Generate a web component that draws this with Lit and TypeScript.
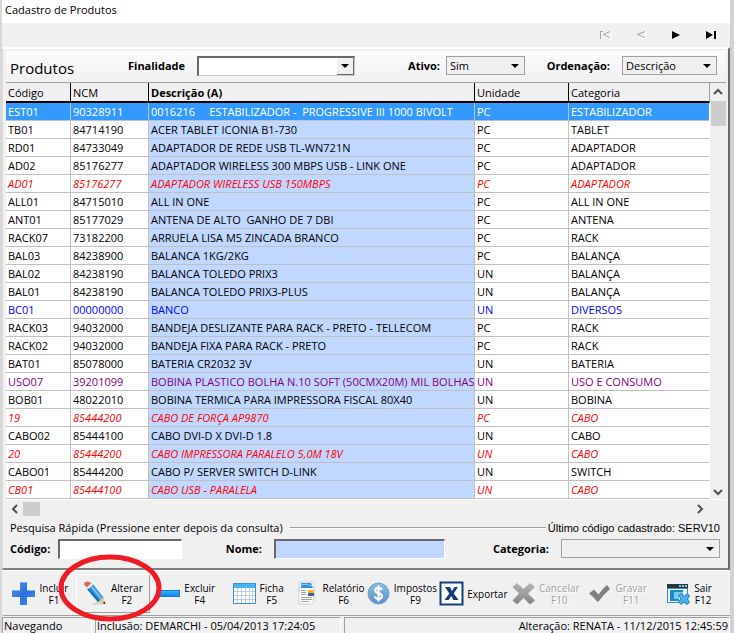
import { LitElement, html, css, svg, nothing, type TemplateResult } from "lit";
import { customElement } from "lit/decorators.js";
import { classMap } from "lit/directives/class-map.js";

type Tone = "" | "red" | "blue" | "purple" | "selected";
type Row = [string, string, string, string, string, Tone];

const rows: Row[] = [
  ["EST01", "90328911", "0016216     ESTABILIZADOR -  PROGRESSIVE III 1000 BIVOLT", "PC", "ESTABILIZADOR", "selected"],
  ["TB01", "84714190", "ACER TABLET ICONIA B1-730", "PC", "TABLET", ""],
  ["RD01", "84733049", "ADAPTADOR DE REDE USB TL-WN721N", "PC", "ADAPTADOR", ""],
  ["AD02", "85176277", "ADAPTADOR WIRELESS 300 MBPS USB - LINK ONE", "PC", "ADAPTADOR", ""],
  ["AD01", "85176277", "ADAPTADOR WIRELESS USB 150MBPS", "PC", "ADAPTADOR", "red"],
  ["ALL01", "84715010", "ALL IN ONE", "PC", "ALL IN ONE", ""],
  ["ANT01", "85177029", "ANTENA DE ALTO  GANHO DE 7 DBI", "PC", "ANTENA", ""],
  ["RACK07", "73182200", "ARRUELA LISA M5 ZINCADA BRANCO", "PC", "RACK", ""],
  ["BAL03", "84238900", "BALANCA 1KG/2KG", "PC", "BALANÇA", ""],
  ["BAL02", "84238190", "BALANCA TOLEDO PRIX3", "UN", "BALANÇA", ""],
  ["BAL01", "84238190", "BALANCA TOLEDO PRIX3-PLUS", "UN", "BALANÇA", ""],
  ["BC01", "00000000", "BANCO", "UN", "DIVERSOS", "blue"],
  ["RACK03", "94032000", "BANDEJA DESLIZANTE PARA RACK - PRETO - TELLECOM", "PC", "RACK", ""],
  ["RACK02", "94032000", "BANDEJA FIXA PARA RACK - PRETO", "PC", "RACK", ""],
  ["BAT01", "85078000", "BATERIA CR2032 3V", "UN", "BATERIA", ""],
  ["USO07", "39201099", "BOBINA PLASTICO BOLHA N.10 SOFT (50CMX20M) MIL BOLHAS", "UN", "USO E CONSUMO", "purple"],
  ["BOB01", "48022010", "BOBINA TERMICA PARA IMPRESSORA FISCAL 80X40", "UN", "BOBINA", ""],
  ["19", "85444200", "CABO DE FORÇA AP9870", "PC", "CABO", "red"],
  ["CABO02", "85444100", "CABO DVI-D X DVI-D 1.8", "UN", "CABO", ""],
  ["20", "85444200", "CABO IMPRESSORA PARALELO 5,0M 18V", "UN", "CABO", "red"],
  ["CABO01", "85444200", "CABO P/ SERVER SWITCH D-LINK", "UN", "SWITCH", ""],
  ["CB01", "85444100", "CABO USB - PARALELA", "UN", "CABO", "red"],
];

const icons: Record<string, TemplateResult> = {
  plus: svg`<defs><linearGradient id="gp" x1="0" y1="0" x2="1" y2="1"><stop offset="0" stop-color="#5b9bea"/><stop offset=".5" stop-color="#2c6fe0"/><stop offset="1" stop-color="#3f8cf0"/></linearGradient></defs>
    <path d="M9 1h7v8h8v7h-8v8H9v-8H1V9h8z" fill="url(#gp)"/><path d="M9.500 1.500h6M1.500 9.500H9.500M16 9.500h7.500" stroke="#7fb2f2"/>`,
  pencil: svg`<path d="M8 23l8-3 8 1-3 2-9 1z" fill="#d5d5d5"/>
    <path d="M4 8l6-5 10.500 13.500-5.500 4.500z" fill="#3a9bdc"/><path d="M7 8L17.500 20l-2.500 1L4 8z" fill="#1f6fb0"/><path d="M8.500 5.500l10 12.500" stroke="#7cc9f5" stroke-width="1.500"/>
    <path d="M1 3.500q0-3 3.500-3l2 .5 2.500 2-4.500 4z" fill="#d96a55"/><path d="M4.300 7.300l5-4.300" stroke="#eee" stroke-width="2"/>
    <path d="M15 21l5.500-4.500L22 23z" fill="#e8c98b"/><path d="M19.500 22l2.500-1.500.2 2.800z" fill="#333"/>`,
  minus: svg`<defs><linearGradient id="gm" x1="0" y1="0" x2="0" y2="1"><stop offset="0" stop-color="#38b4ff"/><stop offset="1" stop-color="#0a86ea"/></linearGradient></defs><rect x="1.500" y="9.500" width="22" height="6" fill="url(#gm)" stroke="#1f78c4"/>`,
  calendar: svg`<rect x="1" y="2" width="23" height="21" rx="1" fill="#3d8fd0"/><rect x="2" y="3" width="21" height="4" fill="#49b4ee"/><rect x="2" y="7" width="21" height="15" fill="#fff"/>
    <path d="M2 10.500h21M2 14.500h21M2 18.500h21M5.500 7v15M9.500 7v15M13.500 7v15M17.500 7v15M20.500 7v15" stroke="#c3c8e2"/>`,
  report: svg`<path d="M4 1h15v19l-2 3H4z" fill="#fafafa" stroke="#d0d0d0"/><path d="M6 2h10l2 5H6z" fill="#2a8fe0"/><path d="M6 4q5-2 11 1" stroke="#8cd0fa" fill="none"/>
    <rect x="13" y="9" width="6" height="3" fill="#f3b52e"/><rect x="13" y="12" width="6" height="3" fill="#3167ad"/>
    <path d="M6 9.500h5M6 11.500h5M6 13.500h5M6 16.500h11M6 18.500h11M6 20.500h8" stroke="#a4a4a4"/>`,
  money: svg`<defs><linearGradient id="gd" x1="0" y1="0" x2="0" y2="1"><stop offset="0" stop-color="#8dbbe0"/><stop offset="1" stop-color="#5a94c8"/></linearGradient></defs>
    <circle cx="12.500" cy="12.500" r="10.500" fill="url(#gd)" stroke="#6da0cc"/><path d="M15.900 9q-.7-2.200-3.400-2.200-3.300 0-3.300 2.600 0 2 3.300 2.800 3.500.8 3.500 3.100 0 2.700-3.500 2.700-3.100 0-3.700-2.600M12.500 4.500v16" fill="none" stroke="#fff" stroke-width="2"/>`,
  excel: svg`<rect x="1.500" y="1.500" width="22" height="22" fill="#fff" stroke="#123e78" stroke-width="2"/><path d="M6 6h5l2 4 2.500-4H19l-4.300 6.500L19.500 19h-5l-2.200-4-2.700 4H5.500l4.800-6.600z" fill="#123e78"/>`,
  cancel: svg`<defs><linearGradient id="gc" x1="0" y1="0" x2="0" y2="1"><stop offset="0" stop-color="#b5b5b5"/><stop offset="1" stop-color="#858585"/></linearGradient></defs><path d="M6 2l6.500 6L19 2l5 4-7 6.500 7 7-5 4-6.500-6.500L6 23.500l-4.500-4 6.500-7L1.500 6z" fill="url(#gc)"/>`,
  check: svg`<path d="M2 12.500l5-4 4.500 5Q15.500 7.500 20 4l3 4q-6 5-11.500 12.500H10Q7 16 2 12.500z" fill="#808080"/>`,
  exit: svg`<rect x="1" y="3" width="21" height="19" rx="1" fill="#3f89b8"/><rect x="1" y="3" width="21" height="4" fill="#28343e"/><path d="M13 5h2M16 5h2M19 5h2" stroke="#7fc4ee" stroke-width="2"/>
    <rect x="2" y="8" width="19" height="13" fill="#f2f8fc"/><path d="M4 9h13v3h-4v8H4z" fill="#1b8bd0"/><path d="M8 11h9v3h-4v4H8z" fill="#7cc9f0"/>
    <path d="M12.500 14.500l3-2 3 2.500 3-2.500 2 2.500-2 3 2 3.500-2.500 2-3-2.500-3 2.500-2.500-2.500 2.500-3z" fill="#4db0ee" stroke="#2680ba"/>`,
};

interface Action { icon: string; label: string; key?: string; disabled?: boolean; raised?: boolean }
const actions: Action[] = [
  { icon: "plus", label: "Incluir", key: "F1" },
  { icon: "pencil", label: "Alterar", key: "F2", raised: true },
  { icon: "minus", label: "Excluir", key: "F4" },
  { icon: "calendar", label: "Ficha", key: "F5" },
  { icon: "report", label: "Relatório", key: "F6" },
  { icon: "money", label: "Impostos", key: "F9" },
  { icon: "excel", label: "Exportar" },
  { icon: "cancel", label: "Cancelar", key: "F10", disabled: true },
  { icon: "check", label: "Gravar", key: "F11", disabled: true },
  { icon: "exit", label: "Sair", key: "F12" },
];

const chevron = (d: string) => html`<svg width="10" height="10" viewBox="0 0 10 10" aria-hidden="true"><path d=${d} fill="none" stroke="#505050" stroke-width="2"/></svg>`;
const caret = html`<svg class="caret" width="8" height="4" viewBox="0 0 8 4" aria-hidden="true"><path d="M0 0h8L4 4z"/></svg>`;

@customElement("app-root")
export class AppRoot extends LitElement {
  static styles = css`
    :host { display: block; background: #f0f0f0; color: #000; font: 11px/16px "Open Sans", "Noto Sans", sans-serif; }
    * { box-sizing: border-box; }
    button, select, input { font: inherit; color: inherit; margin: 0; padding: 0; border: 0; border-radius: 0; background: none; }
    svg { display: block; }
    .window { border-left: 2px solid #d8d8d8; border-right: 4px solid #d2d2d2; }
    .title { margin: 0; height: 23px; padding: 1px 3px; background: #fff; font-size: 11px; line-height: 17px; font-weight: 400; }
    .nav { height: 24px; display: flex; justify-content: flex-end; align-items: center; padding-right: 2px; }
    .nav button { width: 35px; height: 22px; display: grid; place-items: center; }
    .panel { border-top: 2px solid #fff; border-right: 2px solid #696969; border-bottom: 2px solid #808080; border-left: 1px solid #dcdcdc; padding: 2px 2px 0 3px; }
    .filters { height: 32px; display: grid; grid-template-columns: 118px 69px 158fr 91px 79fr 97px 95fr; align-items: center; padding: 0 9px 2px 4px; background: linear-gradient(#fcfcfc, #f0f0f0); border-bottom: 1px solid #a0a0a0; }
    .filters h2 { margin: 0; font-size: 15px; line-height: 20px; font-weight: 400; padding-top: 5px; }
    label { font-weight: 700; }
    .right { text-align: right; padding-right: 12px; }
    .near { padding-right: 6px; }
    .combo { display: grid; align-items: center; height: 19px; border: 1px solid #a0a0a0; background: #f0f0f0; }
    .combo select { grid-area: 1 / 1; appearance: none; width: 100%; height: 17px; padding: 0 20px 0 3px; line-height: 16px; }
    .combo .caret { grid-area: 1 / 1; justify-self: end; margin-right: 5px; pointer-events: none; }
    .combo.classic { background: #fff; border-color: #696969 #c8c8c8 #c8c8c8 #696969; border-width: 2px 1px 1px 2px; height: 20px; }
    .combo.classic .caret { width: 17px; height: 17px; margin-right: 0; padding: 6px 4px; background: #f0f0f0; border: solid #696969; border-width: 0 1px 1px 0; }
    .grid { display: grid; grid-template-columns: 1fr 16px; }
    table { width: 100%; border-collapse: separate; border-spacing: 0; table-layout: fixed; background: #fff; }
    .c1 { width: 65px; } .c2 { width: 78px; } .c4 { width: 94px; } .c5 { width: 141px; }
    th { height: 20px; padding: 2px 2px 0; text-align: left; font-weight: 400; background: #f0f0f0; border-right: 1px solid #000; border-bottom: 2px solid #000; line-height: 16px; }
    thead tr { height: 19px; }
    th.sorted { font-weight: 700; }
    th:last-child { border-right-color: #a0a0a0; }
    td { height: 18px; padding: 0 0 0 2px; white-space: pre; overflow: hidden; line-height: 17px; border-right: 1px solid #c0c0c0; border-bottom: 1px solid #c0c0c0; }
    td:last-child { border-right-color: #fff; }
    td.desc { background: #c0d7ff; }
    .red td { color: #f00; font-style: italic; }
    .blue td { color: #00f; }
    .purple td { color: #800080; }
    .selected td, .selected td.desc { color: #fff; background: #3399ff; }
    .vbar { display: flex; flex-direction: column; align-items: center; }
    .vbar button { width: 16px; height: 18px; display: grid; place-items: center; }
    .thumb { width: 15px; height: 25px; background: #cdcdcd; }
    .vbar .last { margin-top: auto; height: 14px; }
    .hbar { display: flex; align-items: center; height: 18px; padding: 0 18px 0 0; border-top: 1px solid #fff; }
    .hbar button { width: 17px; height: 16px; display: grid; place-items: center; }
    .hbar .thumb { width: 17px; height: 14px; }
    .hbar .last { margin-left: auto; }
    .search { display: flex; align-items: center; height: 20px; padding: 2px 6px 0 4px; }
    .rule { flex: 1; height: 2px; margin: 0 2px 0 7px; background: #a0a0a0; border-bottom: 1px solid #fff; }
    .last-code { font: 11px/16px "Liberation Sans", Arial, sans-serif; }
    .fields { display: grid; grid-template-columns: 48px 124fr 92px 171fr 116px 159fr; align-items: center; height: 31px; padding: 1px 6px 9px 4px; }
    .fields input { width: 100%; height: 20px; padding: 0 3px; background: #fff; border: solid; border-width: 2px 1px 1px 2px; border-color: #696969 #fff #fff #696969; }
    .fields input.tint { background: #c0d7ff; }
    .toolbar { display: flex; height: 46px; margin-left: 1px; padding: 3px 5px 2px 1px; border-top: 1px solid #fff; border-bottom: 1px solid #a0a0a0; }
    .toolbar button { flex: 1; display: flex; align-items: center; justify-content: center; gap: 3px; font-size: 10px; line-height: 12px; text-align: center; position: relative; }
    .toolbar button span { display: block; }
    .toolbar .raised { border: 1px solid; border-color: #fff #a0a0a0 #a0a0a0 #fff; }
    .toolbar button:disabled { color: #a0a0a0; text-shadow: 1px 1px #fff; }
    .ring { position: absolute; left: -19px; top: -21px; overflow: visible; pointer-events: none; z-index: 1; }
    .status { display: grid; grid-template-columns: 90px 246fr 386fr; gap: 3px; height: 18px; padding-top: 1px; line-height: 16px; }
    .status span { border-top: 1px solid #a0a0a0; border-left: 1px solid #a0a0a0; border-right: 1px solid #fff; padding: 0 1px; white-space: nowrap; }
    .status .end { text-align: right; }
  `;

  private action(a: Action) {
    return html`<button type="button" class=${classMap({ raised: !!a.raised })} ?disabled=${a.disabled}>
      <svg width="25" height="25" viewBox="0 0 25 25" aria-hidden="true">${icons[a.icon]}</svg>
      <span>${a.label}${a.key ? html`<br />${a.key}` : nothing}</span>
      ${a.raised ? html`<svg class="ring" width="104" height="68" viewBox="0 0 104 68" aria-hidden="true"><ellipse cx="52" cy="34" rx="49" ry="31" fill="none" stroke="#ed1c24" stroke-width="5"/></svg>` : nothing}
    </button>`;
  }

  render() {
    return html`<div class="window">
      <h1 class="title">Cadastro de Produtos</h1>
      <nav class="nav">
        <button type="button" disabled aria-label="Primeiro"><svg width="13" height="10"><path d="M1.500 9V1.500H4M11 1.500L4.500 4.500 11 8" fill="none" stroke="#a0a0a0"/><path d="M12 1v8.500L5 6M2.500 2v7" fill="none" stroke="#fff"/></svg></button>
        <button type="button" disabled aria-label="Anterior"><svg width="12" height="10"><path d="M10 1.500L2.500 4.500 10 8" fill="none" stroke="#a0a0a0"/><path d="M10.500 1v8L3 6" fill="none" stroke="#fff"/></svg></button>
        <button type="button" aria-label="Próximo"><svg width="8" height="8"><path d="M0 0l8 4-8 4z"/></svg></button>
        <button type="button" aria-label="Último"><svg width="10" height="8"><path d="M0 0l7 4-7 4zM8 0h2v8H8z"/></svg></button>
      </nav>
      <main class="panel">
        <div class="filters">
          <h2>Produtos</h2>
          <label for="fin">Finalidade</label>
          <div class="combo classic"><select id="fin"><option></option></select>${caret}</div>
          <label class="right near" for="ativo">Ativo:</label>
          <div class="combo"><select id="ativo"><option>Sim</option></select>${caret}</div>
          <label class="right" for="ord">Ordenação:</label>
          <div class="combo"><select id="ord"><option>Descrição</option></select>${caret}</div>
        </div>
        <div class="grid">
          <table>
            <colgroup><col class="c1" /><col class="c2" /><col /><col class="c4" /><col class="c5" /></colgroup>
            <thead><tr><th>Código</th><th>NCM</th><th class="sorted">Descrição (A)</th><th>Unidade</th><th>Categoria</th></tr></thead>
            <tbody>${rows.map(([code, ncm, desc, unit, cat, tone]) => html`<tr class=${tone}><td>${code}</td><td>${ncm}</td><td class="desc">${desc}</td><td>${unit}</td><td>${cat}</td></tr>`)}</tbody>
          </table>
          <div class="vbar">
            <button type="button" aria-label="Rolar para cima">${chevron("M1 7l4-4 4 4")}</button>
            <div class="thumb"></div>
            <button type="button" class="last" aria-label="Rolar para baixo">${chevron("M1 3l4 4 4-4")}</button>
          </div>
        </div>
        <div class="hbar">
          <button type="button" aria-label="Rolar à esquerda">${chevron("M7 1L3 5l4 4")}</button>
          <div class="thumb"></div>
          <button type="button" class="last" aria-label="Rolar à direita">${chevron("M3 1l4 4-4 4")}</button>
        </div>
        <div class="search"><span>Pesquisa Rápida (Pressione enter depois da consulta)</span><span class="rule"></span><span class="last-code">Último código cadastrado: SERV10</span></div>
        <div class="fields">
          <label for="cod">Código:</label><input id="cod" type="text" />
          <label class="right" for="nome">Nome:</label><input id="nome" class="tint" type="text" />
          <label class="right" for="cat">Categoria:</label>
          <div class="combo"><select id="cat"><option></option></select>${caret}</div>
        </div>
      </main>
      <div class="toolbar">${actions.map((a) => this.action(a))}</div>
      <footer class="status"><span>Navegando</span><span>Inclusão: DEMARCHI - 05/04/2013 17:24:05</span><span class="end">Alteração: RENATA - 11/12/2015 12:45:59</span></footer>
    </div>`;
  }
}
